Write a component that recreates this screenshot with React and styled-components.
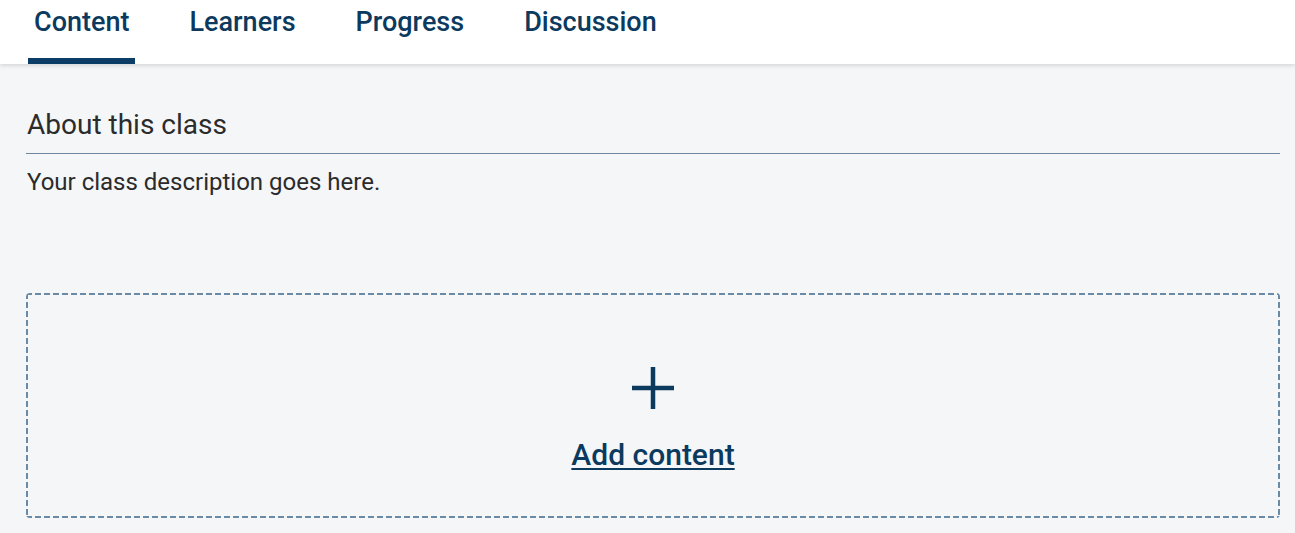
import React from "react";
import styled, { createGlobalStyle } from "styled-components";

const Global = createGlobalStyle`
  html, body { margin: 0; padding: 0; background: #f5f6f8; }
  body { font-family: Roboto, "Liberation Sans", sans-serif; }
`;

const Page = styled.div`
  width: 1295px;
  height: 533px;
  background: #f5f6f8;
  overflow: hidden;
`;

const Header = styled.nav`
  height: 64px;
  background: #ffffff;
  box-shadow: 0 2px 4px rgba(0, 0, 0, 0.12);
  display: flex;
  align-items: stretch;
  padding-left: 28px;
  gap: 48px;
  position: relative;
  z-index: 1;
`;

const Tab = styled.a`
  display: flex;
  align-items: flex-start;
  padding: 5px 6px 0;
  font-size: 27px;
  font-weight: 500;
  color: #0c3a5e;
  text-decoration: none;
  border-bottom: 6px solid ${(p) => (p.$active ? "#0b3d66" : "transparent")};
  box-sizing: border-box;
  line-height: 34px;
`;

const Main = styled.main`
  padding: 43px 15px 0 26px;
  display: flex;
  flex-direction: column;
`;

const Title = styled.h2`
  margin: 0;
  font-size: 28px;
  font-weight: 400;
  color: #2b2b2b;
  line-height: 36px;
  padding-left: 1px;
  padding-bottom: 10px;
  border-bottom: 1px solid #6c879f;
`;

const Description = styled.p`
  margin: 0;
  padding: 14px 0 0 1px;
  font-size: 24px;
  line-height: 28px;
  color: #2b2b2b;
`;

const dash = "#6a8ba8";

const AddBox = styled.button`
  margin-top: 97px;
  height: 225px;
  box-sizing: border-box;
  border: none;
  border-radius: 4px;
  background:
    repeating-linear-gradient(90deg, ${dash} 0 6px, transparent 6px 9px) top left / 100% 2px no-repeat,
    repeating-linear-gradient(90deg, ${dash} 0 6px, transparent 6px 9px) bottom left / 100% 2px no-repeat,
    repeating-linear-gradient(180deg, ${dash} 0 6px, transparent 6px 9px) top left / 2px 100% no-repeat,
    repeating-linear-gradient(180deg, ${dash} 0 6px, transparent 6px 9px) top right / 2px 100% no-repeat;
  display: flex;
  flex-direction: column;
  align-items: center;
  justify-content: flex-start;
  padding: 73px 0 0;
  gap: 28px;
  cursor: pointer;
  font-family: inherit;
`;

const PlusIcon = styled.svg`
  width: 44px;
  height: 44px;
  display: block;
`;

const AddLabel = styled.span`
  font-size: 30px;
  font-weight: 500;
  color: #0c3a5e;
  text-decoration: underline;
  text-decoration-thickness: 2px;
  text-underline-offset: 3px;
  line-height: 34px;
`;

export default function App() {
  return (
    <Page>
      <Global />
      <Header>
        <Tab $active href="#">Content</Tab>
        <Tab href="#">Learners</Tab>
        <Tab href="#">Progress</Tab>
        <Tab href="#">Discussion</Tab>
      </Header>
      <Main>
        <Title>About this class</Title>
        <Description>Your class description goes here.</Description>
        <AddBox>
          <PlusIcon viewBox="0 0 44 44">
            <path d="M22 1v42M1 22h42" stroke="#0c3a5e" strokeWidth="4.5" fill="none" />
          </PlusIcon>
          <AddLabel>Add content</AddLabel>
        </AddBox>
      </Main>
    </Page>
  );
}
